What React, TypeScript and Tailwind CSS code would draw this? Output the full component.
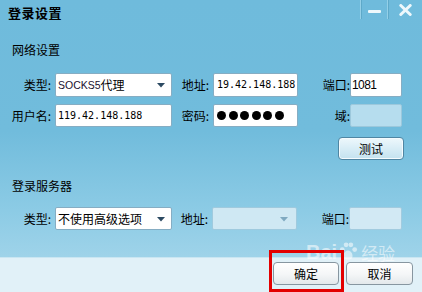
import React from "react";

const cjk = "font-['Noto_Sans_CJK_SC','Noto_Sans_CJK_JP',sans-serif]";
const mono = "font-['DejaVu_Sans_Mono','Liberation_Mono',monospace]";

function Label({ w, pr = 0, children }: { w: number; pr?: number; children: React.ReactNode }) {
  return (
    <div
      className={`${cjk} text-[12px] leading-[16px] text-right text-black shrink-0`}
      style={{ width: w, paddingRight: pr }}
    >
      {children}
    </div>
  );
}

function Arrow({ disabled }: { disabled?: boolean }) {
  return (
    <svg width="8" height="5" viewBox="0 0 8 5" className="shrink-0">
      <path d="M0 0 H8 L4 4.5 Z" fill={disabled ? "#7fa9c0" : "#2c4a62"} />
    </svg>
  );
}

export default function App() {
  return (
    <div
      className={`${cjk} relative w-[422px] h-[292px] overflow-hidden flex flex-col bg-[linear-gradient(180deg,#6fbbdc_0%,#71bcdc_45%,#8ccbe5_72%,#acd9ec_100%)] text-black`}
    >
      {/* title bar */}
      <div className="h-[28px] flex items-start shrink-0">
        <div className="pl-[8px] pt-[5px] text-[13px] font-bold leading-[16px] tracking-[0.5px]">登录设置</div>
        <div className="ml-auto flex h-[19px]">
          <div className="w-[27px] h-full border-l border-[#94d0e8] shadow-[inset_1px_0_0_#5ea9c9] flex justify-center pt-[10px]">
            <div className="w-[13px] h-[3px] bg-[#eef8fc] rounded-[1px]" />
          </div>
          <div className="w-[35px] h-full border-l border-[#94d0e8] shadow-[inset_1px_0_0_#5ea9c9] flex justify-center pt-[4px]">
            <svg width="13" height="12" viewBox="0 0 13 12">
              <path d="M1.8 1.5 L11.2 10.5 M11.2 1.5 L1.8 10.5" stroke="#eef8fc" strokeWidth="3" strokeLinecap="round" />
            </svg>
          </div>
        </div>
      </div>

      {/* section 1 */}
      <div className="pl-[12px] mt-[14px] text-[12px] leading-[16px]">网络设置</div>

      <div className="mt-[15px] h-[24px] flex items-center">
        <Label w={55} pr={4}>类型:</Label>
        <div className="w-[117px] h-[24px] bg-white border border-[#86adc3] rounded-[2px] flex items-center pl-[2px] pr-[6px]">
          <span className="font-['Liberation_Sans',sans-serif] text-[10.5px] leading-[16px] text-[#1a1030]">SOCKS5</span>
          <span className="text-[12px] leading-[16px]">代理</span>
          <div className="ml-auto mt-[1px]"><Arrow /></div>
        </div>
        <Label w={41} pr={4}>地址:</Label>
        <div className="w-[85px] h-[24px] bg-white border border-[#86adc3] rounded-[2px] flex items-center pl-[3px] overflow-hidden">
          <span className={`${mono} text-[10px] leading-[16px] whitespace-nowrap`}>19.42.148.188</span>
        </div>
        <Label w={52}>端口:</Label>
        <div className="w-[52px] h-[24px] bg-white border border-[#86adc3] rounded-[2px] flex items-center pl-[1px]">
          <span className="font-['Liberation_Sans',sans-serif] text-[12px] leading-[16px] tracking-[-0.6px]">1081</span>
        </div>
      </div>

      <div className="mt-[7px] h-[23px] flex items-center">
        <Label w={55} pr={4}>用户名:</Label>
        <div className="w-[117px] h-[23px] bg-white border border-[#86adc3] rounded-[2px] flex items-center pl-[2px]">
          <span className={`${mono} text-[10px] leading-[16px]`}>119.42.148.188</span>
        </div>
        <Label w={41} pr={4}>密码:</Label>
        <div className="w-[85px] h-[23px] bg-white border border-[#86adc3] rounded-[2px] flex items-center pl-[3px] gap-[2.6px]">
          {[0, 1, 2, 3, 4, 5].map((i) => (
            <div key={i} className="w-[9px] h-[9px] rounded-full bg-black" />
          ))}
        </div>
        <Label w={52}>域:</Label>
        <div className="w-[52px] h-[23px] bg-[#b6ddee] border border-[#9cc8dc] rounded-[2px]" />
      </div>

      <div className="mt-[10px] h-[23px] flex">
        <button className="ml-[338px] w-[66px] h-[23px] rounded-[4px] border border-[#4f86a3] bg-[linear-gradient(180deg,#eef8fc_0%,#d8edf6_50%,#c4e2ef_100%)] shadow-[inset_0_0_0_1px_#f4fbfe] text-[12px] leading-[16px] flex items-center justify-center">
          测试
        </button>
      </div>

      {/* section 2 */}
      <div className="pl-[12px] mt-[18px] text-[12px] leading-[16px]">登录服务器</div>

      <div className="mt-[13px] h-[23px] flex items-center">
        <Label w={55} pr={4}>类型:</Label>
        <div className="w-[117px] h-[23px] bg-white border border-[#86adc3] rounded-[2px] flex items-center pl-[2px] pr-[6px]">
          <span className="text-[12px] leading-[16px] whitespace-nowrap">不使用高级选项</span>
          <div className="ml-auto mt-[1px]"><Arrow /></div>
        </div>
        <Label w={40} pr={4}>地址:</Label>
        <div className="w-[85px] h-[23px] bg-[#cfe8f3] border border-[#9fcade] rounded-[2px] flex items-center pr-[8px]">
          <div className="ml-auto mt-[1px]"><Arrow disabled /></div>
        </div>
        <Label w={52}>端口:</Label>
        <div className="w-[53px] h-[23px] bg-[#d2e9f4] border border-[#a2cbdf] rounded-[2px]" />
      </div>

      {/* footer */}
      <div className="mt-auto h-[35px] bg-[#e1f1f8] border-t border-[#c9e6f2] flex items-start pt-[4px]">
        <button className="ml-[273px] w-[66px] h-[23px] rounded-[4px] border border-[#8796a0] bg-[linear-gradient(180deg,#ffffff_0%,#f4f6f7_55%,#e3e8eb_100%)] text-[12px] leading-[16px] flex items-center justify-center">
          确定
        </button>
        <button className="ml-[7px] w-[67px] h-[23px] rounded-[4px] border border-[#8796a0] bg-[linear-gradient(180deg,#ffffff_0%,#f4f6f7_55%,#e3e8eb_100%)] text-[12px] leading-[16px] flex items-center justify-center">
          取消
        </button>
      </div>

      {/* watermark */}
      <div className="absolute left-[306px] top-[241px] flex items-end text-white opacity-55 pointer-events-none">
        <span className="font-['Liberation_Sans',sans-serif] font-bold text-[20px] leading-[21px]">Bai</span>
        <svg width="22" height="21" viewBox="0 0 22 22" className="mb-[1px]">
          <circle cx="5" cy="9" r="2.5" fill="white" />
          <circle cx="9" cy="4" r="2.5" fill="white" />
          <circle cx="14" cy="4" r="2.5" fill="white" />
          <circle cx="18" cy="9" r="2.5" fill="white" />
          <path d="M11 10 C7 10 5 16 7 18 C9 20 13 20 15 18 C17 16 15 10 11 10 Z" fill="white" />
        </svg>
        <span className="text-[17px] leading-[21px] ml-[2px]">经验</span>
      </div>

      {/* red highlight */}
      <div className="absolute left-[269px] top-[250px] w-[75px] h-[42px] border-[3px] border-[#e30000] pointer-events-none" />
    </div>
  );
}
